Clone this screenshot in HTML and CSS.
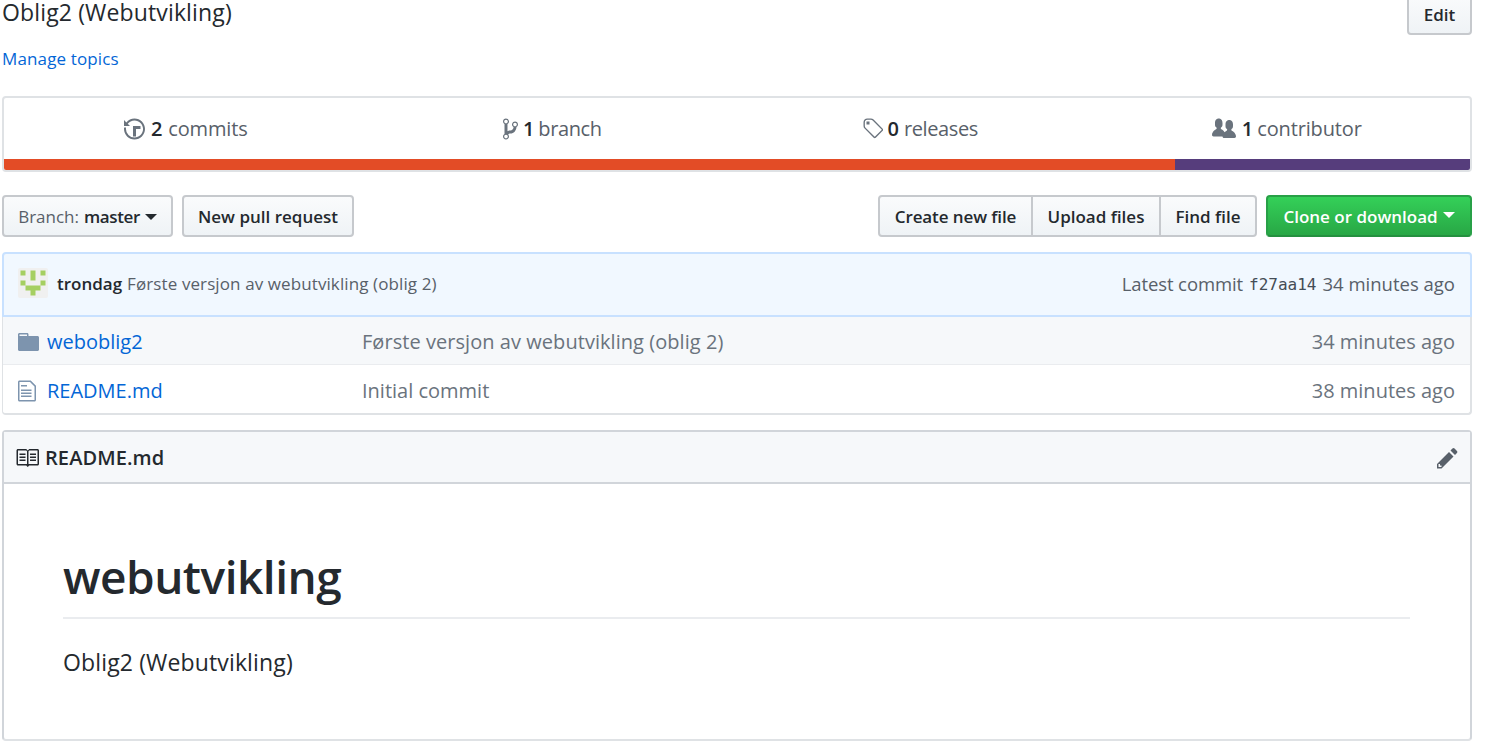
FILE: index.html
```html
<!DOCTYPE html>
<html lang="en">
<head>
<meta charset="utf-8">
<title>webutvikling</title>
<link rel="stylesheet" href="styles.css">
</head>
<body>
<main class="repo">
  <header class="repo-head">
    <div class="about">
      <p class="description">Oblig2 (Webutvikling)</p>
      <a class="topics"><span>Manage topics</span></a>
    </div>
    <button class="btn edit"><span>Edit</span></button>
  </header>

  <section class="summary">
    <ul class="stats">
      <li class="stat s-commits"><svg width="21" height="24" viewBox="0 0 14 16"><path d="M8 13H6V6h5v2H8v5zM7 1C4.81 1 2.87 2.02 1.59 3.59L0 2v4h4L2.5 4.5C3.55 3.17 5.17 2.3 7 2.3c3.14 0 5.7 2.56 5.7 5.7s-2.56 5.7-5.7 5.7A5.71 5.71 0 0 1 1.3 8c0-.34.03-.67.09-1H.08C.03 7.33 0 7.66 0 8c0 3.86 3.14 7 7 7s7-3.14 7-7-3.14-7-7-7z"/></svg><b>2</b><span>commits</span></li>
      <li class="stat s-branch"><svg width="15" height="24" viewBox="0 0 10 16"><path d="M10 5c0-1.11-.89-2-2-2a1.993 1.993 0 0 0-1 3.72v.3c-.02.52-.23.98-.63 1.38-.4.4-.86.61-1.38.63-.83.02-1.48.16-2 .45V4.72a1.993 1.993 0 0 0-1-3.72C.88 1 0 1.89 0 3a2 2 0 0 0 1 1.72v6.56c-.59.35-1 .99-1 1.72 0 1.11.89 2 2 2 1.11 0 2-.89 2-2 0-.53-.2-1-.53-1.36.09-.06.48-.41.59-.47.25-.11.56-.17.94-.17 1.05-.05 1.95-.45 2.75-1.25S8.95 7.77 9 6.73h-.02C9.59 6.37 10 5.73 10 5zM2 1.8c.66 0 1.2.55 1.2 1.2 0 .65-.55 1.2-1.2 1.2C1.35 4.2.8 3.65.8 3c0-.65.55-1.2 1.2-1.2zm0 12.41c-.66 0-1.2-.55-1.2-1.2 0-.65.55-1.2 1.2-1.2.65 0 1.2.55 1.2 1.2 0 .65-.55 1.2-1.2 1.2zm6-8c-.66 0-1.2-.55-1.2-1.2 0-.65.55-1.2 1.2-1.2.65 0 1.2.55 1.2 1.2 0 .65-.55 1.2-1.2 1.2z"/></svg><b>1</b><span>branch</span></li>
      <li class="stat s-releases"><svg width="21" height="24" viewBox="0 0 14 16"><path d="M7.73 1.73C7.26 1.26 6.62 1 5.96 1H3.5C2.13 1 1 2.13 1 3.5v2.47c0 .66.27 1.3.73 1.77l6.06 6.06c.39.39 1.02.39 1.41 0l4.59-4.59a.996.996 0 0 0 0-1.41L7.73 1.73zM2.38 7.09c-.31-.3-.47-.7-.47-1.13V3.5c0-.88.72-1.59 1.59-1.59h2.47c.42 0 .83.16 1.13.47l6.14 6.13-4.73 4.73-6.13-6.15zM3.01 3h2v2H3V3h.01z"/></svg><b>0</b><span>releases</span></li>
      <li class="stat s-contributor"><svg width="24" height="24" viewBox="0 0 16 16"><path d="M16 12.999c0 .439-.45 1-1 1H7.995c-.539 0-.994-.447-.995-.999H1c-.54 0-1-.561-1-1 0-2.634 3-4 3-4s.229-.409 0-1c-.841-.621-1.058-.59-1-3 .058-2.419 1.367-3 2.5-3s2.442.58 2.5 3c.058 2.41-.159 2.379-1 3-.229.59 0 1 0 1s1.549.711 2.42 2.088C9.196 9.369 10 8.999 10 8.999s.229-.409 0-1c-.841-.62-1.058-.59-1-3 .058-2.419 1.367-3 2.5-3s2.437.581 2.495 3c.059 2.41-.158 2.38-1 3-.229.59 0 1 0 1s3.005 1.366 3.005 4"/></svg><b>1</b><span>contributor</span></li>
    </ul>
    <div class="languages"><i class="lang html"></i><i class="lang css"></i></div>
  </section>

  <nav class="toolbar">
    <button class="btn branch"><span class="label">Branch:</span><span class="name">master</span><i class="caret"></i></button>
    <button class="btn pull"><span>New pull request</span></button>
    <div class="group">
      <button class="btn create"><span>Create new file</span></button>
      <button class="btn upload"><span>Upload files</span></button>
      <button class="btn find"><span>Find file</span></button>
    </div>
    <button class="btn clone"><span>Clone or download</span><i class="caret"></i></button>
  </nav>

  <section class="latest">
    <svg class="avatar" width="30" height="30" viewBox="0 0 30 30"><rect width="30" height="30" rx="2" fill="#f0f0f0"/><path fill="#a5cf61" d="M2.5 2.5h5v5h-5zM12.500 2.500h5v10h-5zM22.500 2.500h5v5h-5zM2.500 12.500h5v5h-5zM22.500 12.500h5v5h-5zM7.500 17.500h15v5h-5v5h-5v-5h-5z"/></svg>
    <span class="author">trondag</span>
    <span class="message">Første versjon av webutvikling (oblig 2)</span>
    <span class="when"><span class="lc">Latest commit</span><code>f27aa14</code><span class="ago">34 minutes ago</span></span>
  </section>

  <section class="files">
    <div class="row dir">
      <svg width="21" height="24" viewBox="0 0 14 16"><path d="M13 4H7V3c0-.66-.31-1-1-1H1c-.55 0-1 .45-1 1v10c0 .55.45 1 1 1h12c.55 0 1-.45 1-1V5c0-.55-.45-1-1-1zM6 4H1V3h5v1z"/></svg>
      <a class="f1"><span>weboblig2</span></a><span class="msg m1"><span>Første versjon av webutvikling (oblig 2)</span></span><span class="ago">34 minutes ago</span>
    </div>
    <div class="row">
      <svg width="18" height="24" viewBox="0 0 12 16"><path d="M6 5H2V4h4v1zM2 8h7V7H2v1zm0 2h7V9H2v1zm0 2h7v-1H2v1zm10-7.500V14c0 .55-.45 1-1 1H1c-.55 0-1-.45-1-1V2c0-.55.45-1 1-1h7.500L12 4.500zM11 5L8 2H1v12h10V5z"/></svg>
      <a class="f2"><span>README.md</span></a><span class="msg m2"><span>Initial commit</span></span><span class="ago">38 minutes ago</span>
    </div>
  </section>

  <section class="readme">
    <h3 class="readme-head">
      <svg class="book" width="24" height="24" viewBox="0 0 16 16"><path d="M3 5h4v1H3V5zm0 3h4V7H3v1zm0 2h4V9H3v1zm11-5h-4v1h4V5zm0 2h-4v1h4V7zm0 2h-4v1h4V9zm2-6v9c0 .55-.45 1-1 1H9.500l-1 1-1-1H2c-.55 0-1-.45-1-1V3c0-.55.45-1 1-1h5.500l1 1 1-1H15c.55 0 1 .45 1 1zm-8 .5L7.500 3H2v9h6V3.500zm7-.5H9.500l-.5.5V12h6V3z"/></svg>
      <span class="readme-name">README.md</span>
      <svg class="pencil" width="21" height="24" viewBox="0 0 14 16"><path d="M0 12v3h3l8-8-3-3-8 8zm3 2H1v-2h1v1h1v1zm10.300-9.300L12 6 9 3l1.300-1.300a.996.996 0 0 1 1.410 0l1.590 1.590c.39.39.39 1.020 0 1.410z"/></svg>
    </h3>
    <article class="readme-body">
      <h1><span>webutvikling</span></h1>
      <p><span>Oblig2 (Webutvikling)</span></p>
    </article>
  </section>
</main>
</body>
</html>
```
FILE: styles.css
```css
* { box-sizing: border-box; }
body {
  margin: 0;
  height: 749px;
  background: #fff;
  color: #24292e;
  font-family: "Open Sans", "Noto Sans", sans-serif;
  font-size: 20px;
}
p, h1, h3, ul { margin: 0; padding: 0; list-style: none; }
svg { display: block; flex: none; fill: currentColor; }
span, a, b, code { white-space: nowrap; }

.repo { width: 1470px; margin-left: 2px; }

.repo-head { display: flex; justify-content: space-between; height: 96px; }
.description { font-size: 23px; line-height: 25px; height: 47px; letter-spacing: 0.14px; }
.topics { display: block; color: #0366d6; font-size: 17px; line-height: 24px; letter-spacing: 0.13px; }

.btn {
  display: flex;
  align-items: center;
  justify-content: center;
  height: 42px;
  padding: 1px 0 0;
  border: 2px solid #c6c9cd;
  border-radius: 4px;
  background: linear-gradient(#fafbfc, #eff3f6);
  color: #24292e;
  font: 600 17px/24px "Open Sans", "Noto Sans", sans-serif;
}
.edit { width: 65px; margin-top: -7px; }

.summary { height: 76px; border: 2px solid #dfe2e5; border-radius: 4px; overflow: hidden; }
.stats { display: grid; grid-template-columns: repeat(4, 1fr); height: 61px; }
.stat { display: flex; align-items: center; justify-content: center; color: #586069; font-size: 20px; line-height: 28px; }
.stat svg { color: #6a737d; margin-right: 6px; }
.stat b { color: #24292e; font-weight: 600; margin-right: 6px; }
.s-commits { padding-right: 3px; }
.s-commits span { letter-spacing: -0.15px; }
.s-branch span, .s-releases span { letter-spacing: -0.4px; }
.s-branch b, .s-releases b, .s-contributor b { margin-right: 5px; }
.s-branch svg, .s-releases svg { margin-right: 5px; }
.s-branch { padding-right: 3px; }
.s-branch b, .s-contributor b { margin-right: 4px; }
.s-releases { padding-right: 1px; }
.s-contributor span { letter-spacing: -0.15px; }
.languages { display: flex; height: 11px; }
.lang.html { width: 1171px; background: #e34c26; }
.lang.css { flex: 1; background: #563d7c; }

.toolbar { display: flex; height: 42px; margin: 23px 0 15px; }
.branch { width: 171px; margin-right: 9px; }
.branch .label { color: #586069; font-weight: 400; margin-right: 5px; }
.branch .name { letter-spacing: -0.4px; }
.caret { border: 6px solid transparent; border-top-color: currentColor; border-bottom: 0; margin-left: 5px; }
.pull { width: 172px; }
.group { display: flex; margin-left: auto; margin-right: 9px; }
.group .btn { border-radius: 0; }
.group .create { width: 154px; border-right-width: 1px; border-radius: 4px 0 0 4px; letter-spacing: -0.1px; }
.group .upload { width: 128px; border-left-width: 1px; border-right-width: 1px; }
.group .find { width: 97px; border-left-width: 1px; border-radius: 0 4px 4px 0; }
.clone { width: 206px; color: #fff; border-color: #28a047 #28a047 #24903f; background: linear-gradient(#34d058, #28a745); }
.clone .caret { margin-bottom: 3px; }

.latest {
  display: flex;
  align-items: center;
  height: 65px;
  padding: 0 15px 2px 14px;
  border: 2px solid #c8e1ff;
  border-radius: 4px 4px 0 0;
  background: #f1f8ff;
}
.avatar { margin: -2px 9px 0 0; }
.author { font-size: 17px; font-weight: 600; margin-right: 5px; }
.message { font-size: 17px; color: #586069; letter-spacing: 0.1px; }
.when { display: flex; align-items: center; margin-left: auto; font-size: 18.5px; color: #586069; }
.when .lc { letter-spacing: -0.1px; }
.when code { margin: 3px 6px 0; font: 16px/24px "DejaVu Sans Mono", monospace; color: #444d56; }

.files { border: 2px solid #dfe2e5; border-top: 0; border-left-width: 1px; border-radius: 0 0 4px 4px; overflow: hidden; height: 98px; }
.row { display: flex; align-items: center; height: 47px; padding: 2px 15px 0; color: #6a737d; line-height: 28px; }
.row + .row { border-top: 1px solid #eaecef; height: 49px; padding-top: 4px; }
.row svg { color: #7d94ae; }
.row + .row svg { margin-top: -1px; }
.row.dir { background: #f6f8fa; }
.row a { color: #0366d6; margin-left: 8px; width: 315px; }
.row:not(.dir) a { margin-left: 11px; }
.row .m1 { letter-spacing: 0.05px; }
.row .ago { margin-left: auto; }

.readme { height: 311px; margin-top: 15px; border: 2px solid #d1d5da; border-bottom-color: #dfe2e5; border-radius: 4px; }
.readme-head { display: flex; align-items: center; height: 52px; padding: 0 12px 0 11px; border-bottom: 2px solid #d1d5da; background: #f6f8fa; font-size: 20px; font-weight: 600; letter-spacing: 0.1px; }
.readme-name { margin-left: 6px; }
.book { margin-top: 1px; }
.pencil { margin: 2px 0 0 auto; color: #586069; }
.readme-body { padding: 59px 60px 0 59px; }
h1 { height: 76px; border-bottom: 2px solid #eaecef; font-size: 46px; font-weight: 600; line-height: 66px; letter-spacing: -0.5px; }
.readme-body p { margin-top: 25px; font-size: 23px; line-height: 36px; letter-spacing: 0.14px; }
```
